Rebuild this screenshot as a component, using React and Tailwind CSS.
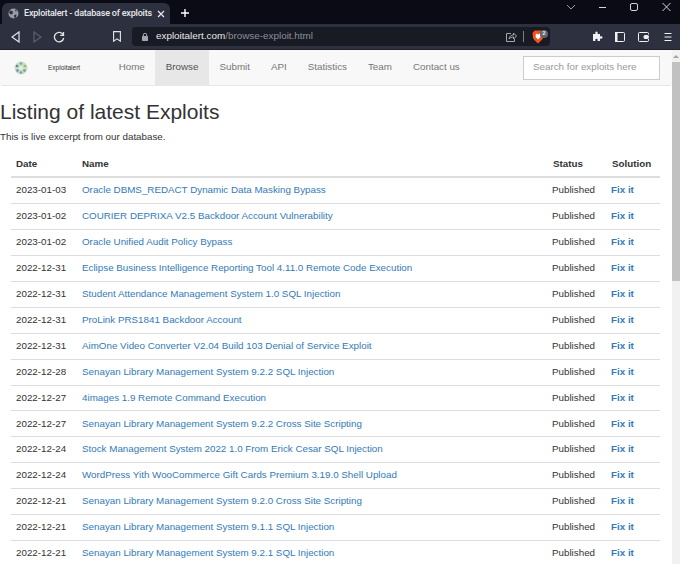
import React from "react";

const rows = [
  ["2023-01-03", "Oracle DBMS_REDACT Dynamic Data Masking Bypass"],
  ["2023-01-02", "COURIER DEPRIXA V2.5 Backdoor Account Vulnerability"],
  ["2023-01-02", "Oracle Unified Audit Policy Bypass"],
  ["2022-12-31", "Eclipse Business Intelligence Reporting Tool 4.11.0 Remote Code Execution"],
  ["2022-12-31", "Student Attendance Management System 1.0 SQL Injection"],
  ["2022-12-31", "ProLink PRS1841 Backdoor Account"],
  ["2022-12-31", "AimOne Video Converter V2.04 Build 103 Denial of Service Exploit"],
  ["2022-12-28", "Senayan Library Management System 9.2.2 SQL Injection"],
  ["2022-12-27", "4images 1.9 Remote Command Execution"],
  ["2022-12-27", "Senayan Library Management System 9.2.2 Cross Site Scripting"],
  ["2022-12-24", "Stock Management System 2022 1.0 From Erick Cesar SQL Injection"],
  ["2022-12-24", "WordPress Yith WooCommerce Gift Cards Premium 3.19.0 Shell Upload"],
  ["2022-12-21", "Senayan Library Management System 9.2.0 Cross Site Scripting"],
  ["2022-12-21", "Senayan Library Management System 9.1.1 SQL Injection"],
  ["2022-12-21", "Senayan Library Management System 9.2.1 SQL Injection"],
];

const navItems = ["Home", "Browse", "Submit", "API", "Statistics", "Team", "Contact us"];

const TabBar = () => (
  <div className="flex h-6 shrink-0 items-end bg-[#0a0b14] pl-[2px]">
    <div className="flex h-[21px] w-[168px] items-center rounded-t-md bg-[#2d303e] pl-[6px] pr-[5px] text-[#e8e9ed]">
      <svg width="11" height="11" viewBox="0 0 11 11" className="mr-[5px] shrink-0">
        <circle cx="5.5" cy="5.5" r="5" fill="#9a9ca5" />
        <path d="M2 2.5 5 3.5 4.5 6 3 6.5 1 5ZM6 7l2.5-.5L8 9.5 6.5 10Z M7 1l2 2-1.5 .5Z" fill="#2d303e" />
      </svg>
      <span className="flex-1 whitespace-nowrap font-['Roboto',sans-serif] text-[9px] font-medium tracking-[-0.2px]">Exploitalert - database of exploits</span>
      <svg width="8" height="8" viewBox="0 0 8 8" className="shrink-0" stroke="#e8e9ed" strokeWidth="1.2">
        <path d="M1 1l6 6M7 1 1 7" />
      </svg>
    </div>
    <svg width="10" height="10" viewBox="0 0 10 10" className="mb-[6px] ml-[10px]" stroke="#fff" strokeWidth="1.4">
      <path d="M5 1v8M1 5h8" />
    </svg>
    <div className="ml-auto mr-[9px] mt-[2px] flex items-center self-start">
      <svg width="10" height="6" viewBox="0 0 10 6" fill="none" stroke="#9a9ca5" className="mr-[22px]">
        <path d="M1 1l4 4 4-4" />
      </svg>
      <svg width="9" height="10" viewBox="0 0 9 10" stroke="#d5d6db" className="mr-[23px]">
        <path d="M1 5.5h7" />
      </svg>
      <svg width="9" height="10" viewBox="0 0 9 10" fill="none" stroke="#d5d6db" className="mr-[23px]">
        <rect x=".5" y="1.5" width="7" height="7" rx="1.5" />
      </svg>
      <svg width="9" height="10" viewBox="0 0 9 10" fill="none" stroke="#d5d6db">
        <path d="M.5 1l8 8M8.5 1l-8 8" />
      </svg>
    </div>
  </div>
);

const Toolbar = () => (
  <div className="flex h-[26px] shrink-0 items-center border-b border-[#20222d] bg-[#2d303e]">
    <svg width="9" height="12" viewBox="0 0 9 12" fill="none" stroke="#e4e5e9" strokeWidth="1.2" className="ml-[11px]">
      <path d="M8 1 1 6l7 5Z" />
    </svg>
    <svg width="9" height="12" viewBox="0 0 9 12" fill="none" stroke="#5d6070" strokeWidth="1.2" className="ml-[13px]">
      <path d="M1 1l7 5-7 5Z" />
    </svg>
    <svg width="12" height="12" viewBox="0 0 12 12" fill="none" stroke="#e4e5e9" strokeWidth="1.3" className="ml-[11px]">
      <path d="M10.3 4A4.7 4.7 0 1 0 10.7 7" />
      <path d="M10.5 1v3.3H7.2" />
    </svg>
    <svg width="8" height="11" viewBox="0 0 8 11" fill="none" stroke="#e4e5e9" strokeWidth="1.1" className="ml-[48px]">
      <path d="M.6.6h6.800v9.600L4 7.800.6 10.200Z" />
    </svg>
    <div className="ml-[11px] flex h-[19px] w-[418px] shrink-0 items-center rounded-[4px] bg-[#181a24] pl-[10px]">
      <svg width="6" height="8" viewBox="0 0 6 8" className="shrink-0">
        <rect y="3" width="6" height="5" rx=".7" fill="#a5a7b0" />
        <path d="M1.3 3.5V2a1.7 1.7 0 0 1 3.4 0v1.500" fill="none" stroke="#a5a7b0" />
      </svg>
      <span className="ml-[8px] text-[9.9px] text-[#e8e9ed]">exploitalert.com</span>
      <span className="text-[9.9px] text-[#8d8f99]">/browse-exploit.html</span>
      <svg width="12" height="12" viewBox="0 0 12 12" fill="none" stroke="#a5a7b0" className="ml-auto shrink-0">
        <path d="M6 2.5H1.5v8h8V8" />
        <path d="M4 8c.3-2.5 2-4 4.500-4V2l3 3-3 3V6C6.500 6 5 6.800 4 8Z" />
      </svg>
      <div className="ml-[6px] h-[11px] w-px bg-[#7c7e89]" />
      <div className="relative ml-[8px] w-[18px]">
        <svg width="12" height="14" viewBox="0 0 12 14" className="block">
          <path d="M2.5.5h7L11.5 3 11 8c-.3 1.500-3.500 4-5 5.500C4.500 12 1.300 9.500 1 8L.5 3Z" fill="#f0541e" />
          <path d="M4 3.500 6 4.500 8 3.500 8.500 7 6 9.500 3.500 7Z" fill="#fff" />
        </svg>
        <span className="absolute left-[8px] top-0 flex h-[8px] w-[8px] items-center justify-center rounded-full bg-[#62656f] text-[6px] font-bold text-[#e8e9ed]">
          2
        </span>
      </div>
    </div>
    <svg width="11" height="11" viewBox="0 0 11 11" fill="#f1f1f3" className="ml-[42px] shrink-0">
      <path d="M1 3h2.500C3 1.500 3.500.5 4.500.5S6 1.500 5.500 3H8v2.500c1.500-.5 2.500 0 2.500 1s-1 1.500-2.500 1V10H5.500C6 8.500 5.500 7.800 4.500 7.800S3 8.500 3.500 10H1Z" />
    </svg>
    <svg width="10" height="10" viewBox="0 0 10 10" fill="none" stroke="#f1f1f3" className="ml-[12px] shrink-0">
      <rect x=".5" y=".5" width="9" height="9" rx="1" />
      <rect x=".5" y=".5" width="1.500" height="9" fill="#f1f1f3" />
    </svg>
    <svg width="11" height="10" viewBox="0 0 11 10" fill="none" stroke="#f1f1f3" className="ml-[13px] shrink-0">
      <path d="M10.5 2.500V1.500a1 1 0 0 0-1-1h-8a1 1 0 0 0-1 1v7a1 1 0 0 0 1 1h8a1 1 0 0 0 1-1V7" />
      <rect x="6" y="3.500" width="4.500" height="3" rx="1" fill="#f1f1f3" />
    </svg>
    <svg width="8" height="10" viewBox="0 0 8 10" stroke="#f1f1f3" className="ml-[15px] shrink-0">
      <path d="M.5 1.500h7M.5 5h7M.5 8.500h7" />
    </svg>
  </div>
);

const Logo = () => (
  <svg width="14" height="14" viewBox="0 0 14 14" className="ml-[14px] shrink-0 self-center">
    <circle cx="7" cy="7" r="6.500" fill="#c9dcc9" />
    <circle cx="7" cy="2.500" r="1.300" fill="#7cae8b" />
    <circle cx="3" cy="5" r="1.300" fill="#5b8f9c" />
    <circle cx="11" cy="5" r="1.300" fill="#a3bb6c" />
    <circle cx="3.500" cy="9.500" r="1.300" fill="#6b8fb0" />
    <circle cx="10.500" cy="9.500" r="1.300" fill="#6aa878" />
    <circle cx="7" cy="11.500" r="1.300" fill="#7b9fb0" />
    <circle cx="7" cy="7" r="1.800" fill="#eef3e6" />
  </svg>
);

const Navbar = () => (
  <div className="flex h-[36px] shrink-0 items-stretch rounded-b-[3px] border-b border-[#e7e7e7] bg-[#f8f8f8]">
    <Logo />
    <span className="ml-[20px] self-center text-[6.5px] font-medium text-[#333]">Exploitalert</span>
    <div className="ml-[28px] flex">
      {navItems.map((item) => (
        <span
          key={item}
          className={`flex items-center px-[10.5px] text-[9.8px] ${
            item === "Browse" ? "bg-[#e7e7e7] text-[#555]" : "text-[#777]"
          }`}
        >
          {item}
        </span>
      ))}
    </div>
    <div className="ml-auto mr-[12px] flex h-[24px] w-[137px] items-center self-center border border-[#ccc] bg-white pl-[9px] text-[9.8px] text-[#999]">
      Search for exploits here
    </div>
  </div>
);

const Row = ({ date, name }) => (
  <div className="flex h-[25.9px] items-center border-b border-[#ddd] text-[9.8px]">
    <span className="w-[71px] pl-[5px] text-[#333]">{date}</span>
    <a className="flex-1 text-[#337ab7]">{name}</a>
    <span className="w-[59px] text-[#333]">Published</span>
    <a className="w-[49px] font-bold text-[#337ab7]">Fix it</a>
  </div>
);

const App = () => {
  return (
    <div className="flex h-[564px] w-[680px] flex-col overflow-hidden bg-white font-['Liberation_Sans',Arial,sans-serif]">
      <TabBar />
      <Toolbar />
      <div className="flex min-h-0 flex-1">
        <div className="flex min-w-0 flex-1 flex-col overflow-hidden">
          <Navbar />
          <h1 className="mt-[13px] text-[21px] leading-[25px] font-normal text-[#333]">Listing of latest Exploits</h1>
          <p className="mt-[5px] text-[9.8px] leading-[15px] text-[#333]">This is live excerpt from our database.</p>
          <div className="ml-[11px] mr-[12px] mt-[8.4px]">
            <div className="flex h-[26px] items-center border-b-2 border-[#ddd] text-[9.8px] font-bold text-[#333]">
              <span className="w-[71px] pl-[5px]">Date</span>
              <span className="flex-1">Name</span>
              <span className="w-[59px] pl-px">Status</span>
              <span className="w-[49px] pl-px">Solution</span>
            </div>
            {rows.map((row, idx) => (
              <Row key={idx} date={row[0]} name={row[1]} />
            ))}
          </div>
        </div>
        <div className="flex w-[8px] shrink-0 flex-col bg-[#f1f1f1]">
          <div className="flex h-[12px] items-center justify-center">
            <div className="h-0 w-0 border-x-[3px] border-b-[3px] border-x-transparent border-b-[#a3a3a3]" />
          </div>
          <div className="h-[219px] bg-[#c1c1c1]" />
        </div>
      </div>
    </div>
  );
};

export default App;
